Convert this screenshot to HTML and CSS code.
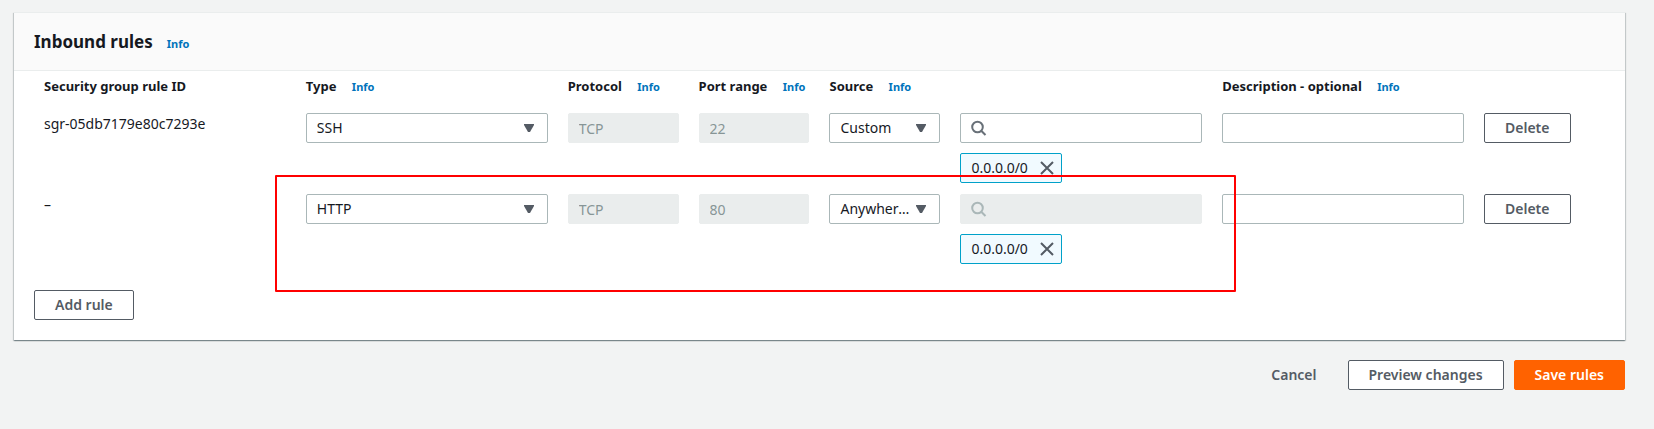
FILE: index.html
```html
<!DOCTYPE html>
<html lang="en">
<head>
<meta charset="utf-8">
<title>Edit inbound rules</title>
<link rel="stylesheet" href="styles.css">
</head>
<body>
<svg class="sprite" aria-hidden="true">
  <symbol id="caret" viewBox="0 0 10 8"><path d="M0 0h10v1L6 8H4L0 1z" fill="currentColor"/></symbol>
  <symbol id="search" viewBox="0 0 16 16"><circle cx="6.500" cy="7" r="5.300" fill="none" stroke="currentColor" stroke-width="2"/><path d="M10.200 10.700L14.500 15" stroke="currentColor" stroke-width="2"/></symbol>
  <symbol id="close" viewBox="0 0 16 16"><path d="M2 2l12 12M14 2L2 14" fill="none" stroke="currentColor" stroke-width="2"/></symbol>
</svg>
<main class="page">
  <section class="panel">
    <header class="panel-header">
      <h2 class="title">Inbound rules</h2>
      <a class="info" href="#">Info</a>
    </header>
    <div class="panel-body">
      <table class="rules">
        <colgroup>
          <col class="wide"><col class="wide"><col class="narrow"><col class="narrow"><col class="narrow"><col class="wide"><col class="wide"><col class="narrow">
        </colgroup>
        <thead>
          <tr>
            <th>Security group rule ID</th>
            <th>Type <a class="info" href="#">Info</a></th>
            <th>Protocol <a class="info" href="#">Info</a></th>
            <th>Port range <a class="info" href="#">Info</a></th>
            <th colspan="2">Source <a class="info" href="#">Info</a></th>
            <th>Description - optional <a class="info" href="#">Info</a></th>
            <td></td>
          </tr>
        </thead>
        <tbody>
          <tr>
            <td>sgr-05db7179e80c7293e</td>
            <td><div class="select"><select class="field" aria-label="Type"><option>SSH</option></select><svg class="caret"><use href="#caret"/></svg></div></td>
            <td><input class="field" aria-label="Protocol" value="TCP" disabled></td>
            <td><input class="field" aria-label="Port range" value="22" disabled></td>
            <td><div class="select"><select class="field" aria-label="Source"><option>Custom</option></select><svg class="caret"><use href="#caret"/></svg></div></td>
            <td>
              <div class="search"><input class="field" type="text" aria-label="Source address"><svg class="search-icon"><use href="#search"/></svg></div>
              <span class="token">0.0.0.0/0<button class="remove" aria-label="Remove 0.0.0.0/0"><svg class="close"><use href="#close"/></svg></button></span>
            </td>
            <td><input class="field" aria-label="Description"></td>
            <td><button class="button">Delete</button></td>
          </tr>
          <tr>
            <td>–</td>
            <td><div class="select"><select class="field" aria-label="Type"><option>HTTP</option></select><svg class="caret"><use href="#caret"/></svg></div></td>
            <td><input class="field" aria-label="Protocol" value="TCP" disabled></td>
            <td><input class="field" aria-label="Port range" value="80" disabled></td>
            <td><div class="select"><select class="field" aria-label="Source"><option>Anywhere-IPv4</option></select><svg class="caret"><use href="#caret"/></svg></div></td>
            <td>
              <div class="search"><input class="field" type="text" aria-label="Source address" disabled><svg class="search-icon"><use href="#search"/></svg></div>
              <span class="token">0.0.0.0/0<button class="remove" aria-label="Remove 0.0.0.0/0"><svg class="close"><use href="#close"/></svg></button></span>
            </td>
            <td><input class="field" aria-label="Description"></td>
            <td><button class="button">Delete</button></td>
          </tr>
        </tbody>
      </table>
      <button class="button">Add rule</button>
      <div class="highlight"></div>
    </div>
  </section>
  <footer class="actions">
    <button class="button link">Cancel</button>
    <button class="button">Preview changes</button>
    <button class="button primary">Save rules</button>
  </footer>
</main>
</body>
</html>
```
FILE: styles.css
```css
* { box-sizing: border-box; }
body {
  margin: 0;
  background: #f2f3f3;
  color: #16191f;
  font: 14px/22px "Noto Sans", "Open Sans", sans-serif;
}
.sprite { display: none; }
.page { padding: 12px 29px 38px 14px; }
.panel {
  background: #fff;
  border-top: 1px solid #eaeded;
  box-shadow: 0 1px 1px 0 rgba(0, 28, 36, .3), 1px 1px 1px 0 rgba(0, 28, 36, .15), -1px 1px 1px 0 rgba(0, 28, 36, .15);
}
.panel-header {
  display: flex;
  align-items: baseline;
  gap: 14px;
  padding: 15px 20px;
  background: #fafafa;
  border-bottom: 1px solid #eaeded;
}
.title { margin: 0; font-size: 17px; line-height: 27px; }
.info { color: #0073bb; font-size: 11px; font-weight: 700; text-decoration: none; }
.panel-body { position: relative; padding: 0 20px 20px; }
.rules { width: 100%; table-layout: fixed; border-collapse: collapse; margin-bottom: 15px; }
.wide { width: 16.666%; }
.narrow { width: 8.333%; }
th, td { padding: 0 10px 11px; text-align: left; vertical-align: top; white-space: nowrap; }
th { padding: 4px 10px 15px; font-size: 13px; }
th .info { margin-left: 12px; }
.field {
  display: block;
  width: 100%;
  height: 30px;
  margin: 0;
  padding: 0 10px;
  border: 1px solid #aab7b8;
  border-radius: 2px;
  background: #fff;
  color: #16191f;
  font: inherit;
  appearance: none;
}
.field:disabled { background: #eaeded; border-color: #eaeded; color: #879596; opacity: 1; }
.select, .search { position: relative; }
.select .field { padding-right: 28px; overflow: hidden; text-overflow: ellipsis; }
.caret { position: absolute; top: 11px; right: 14px; width: 10px; height: 8px; color: #545b64; pointer-events: none; }
.search .field { padding-left: 34px; }
.search-icon { position: absolute; top: 7px; left: 11px; width: 16px; height: 16px; color: #687078; }
.field:disabled + .search-icon { color: #aab7b8; }
.token {
  display: inline-flex;
  align-items: center;
  gap: 11px;
  height: 30px;
  margin-top: 10px;
  padding: 0 6px 0 10px;
  border: 1px solid #00a1c9;
  border-radius: 2px;
  background: #f1faff;
  vertical-align: top;
}
.remove { display: flex; padding: 0; border: 0; background: none; color: #545b64; }
.close { width: 16px; height: 16px; }
.button {
  height: 30px;
  padding: 0 20px;
  border: 1px solid #545b64;
  border-radius: 2px;
  background: #fff;
  color: #545b64;
  font: inherit;
  font-weight: 600;
}
.actions { display: flex; justify-content: flex-end; gap: 10px; padding-top: 20px; }
.link { background: none; border-color: transparent; }
.primary { background: #ff6200; border-color: #ff6200; color: #fff; }
.highlight {
  position: absolute;
  top: 104px;
  bottom: 48px;
  left: 261px;
  right: 389px;
  border: 2px solid #f00;
  border-radius: 1px;
  pointer-events: none;
}
```
